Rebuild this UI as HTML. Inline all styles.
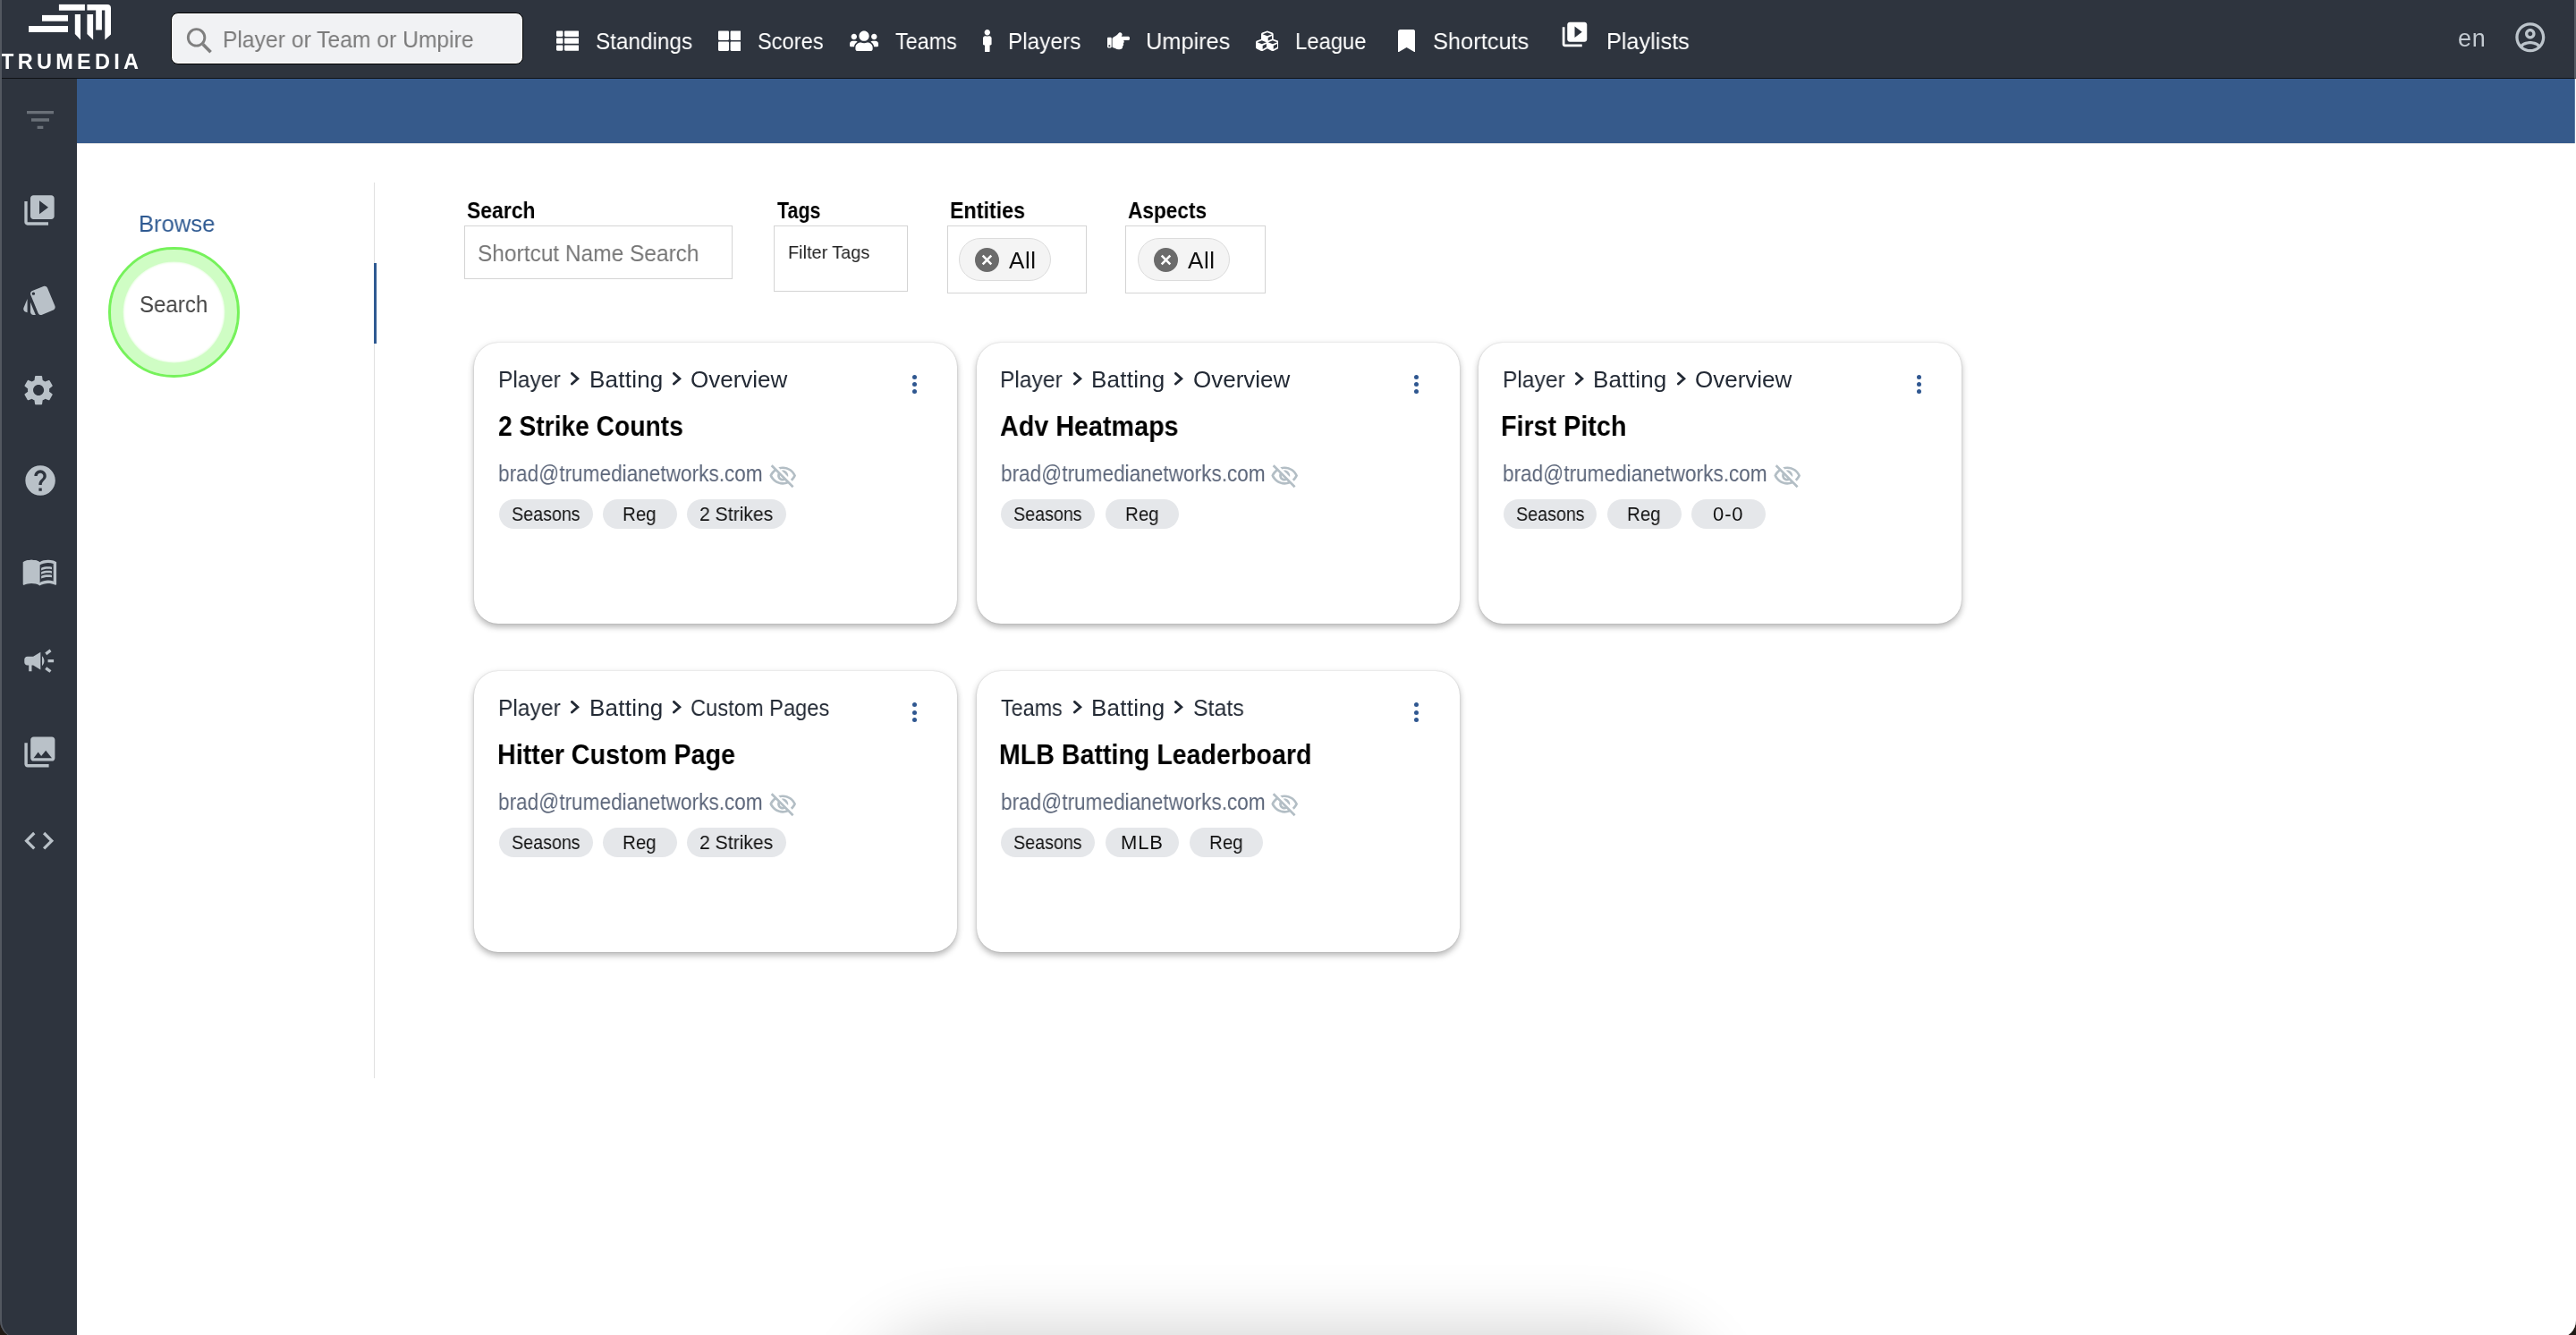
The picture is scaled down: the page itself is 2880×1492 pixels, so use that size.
<!DOCTYPE html>
<html lang="en"><head><meta charset="utf-8"><title>TruMedia - Shortcuts</title>
<style>
html,body{margin:0;padding:0;width:2880px;height:1492px;overflow:hidden;background:#fff;font-family:'Liberation Sans',sans-serif;}
.a{position:absolute;display:block;}
.t{position:absolute;white-space:nowrap;line-height:1;transform-origin:0 0;will-change:transform;}
.card{position:absolute;width:540px;height:314px;border-radius:27px;background:#fff;box-shadow:0 0 1.5px rgba(0,0,0,.2),0 4px 7px rgba(0,0,0,.25),0 1px 10px rgba(0,0,0,.06);}
.dot{position:absolute;width:5.2px;height:5.2px;border-radius:50%;background:#2f5790;}
.chip{position:absolute;height:33px;border-radius:16.5px;background:#e5e7ea;}
.box{position:absolute;border:1.5px solid #d4d4d4;box-sizing:border-box;background:#fff;}
.pill{position:absolute;height:48px;border-radius:24px;background:#f4f4f4;border:1.5px solid #dcdcdc;box-sizing:border-box;}
.xic{position:absolute;width:27px;height:27px;border-radius:50%;background:#6b6b6b;}
.sb path{fill:#b9c1c8;}
.nv path{fill:#fff;}
</style></head><body>
<!-- header -->
<header class="a" style="left:0;top:0;width:2880px;height:87px;background:#2e343e"></header>
<div class="a" style="left:0;top:87px;width:2880px;height:1px;background:#101215"></div>
<!-- sidebar -->
<nav class="a" style="left:0;top:88px;width:86px;height:1404px;background:#2e343e"></nav>
<!-- blue band -->
<div class="a" style="left:86px;top:88px;width:2793px;height:72px;background:#365a8b"></div>
<div class="a" style="left:86px;top:160px;width:2793px;height:1px;background:#e6e6e6"></div>
<!-- logo -->
<svg class="a" style="left:0;top:0;will-change:transform" width="170" height="86" viewBox="0 0 170 86">
 <g fill="#fff">
  <rect x="65.9" y="4.9" width="29" height="6.8"/>
  <rect x="47" y="16.9" width="29" height="6.8"/>
  <rect x="32.1" y="29" width="43.9" height="7"/>
  <path d="M83.8 16 H90 V44.5 L83.8 38 Z"/>
  <path d="M97.4 16 H104.1 V44.5 L97.4 38 Z"/>
  <path d="M97.4 4.9 H120 Q124 4.9 124 9 V38.4 L117.3 44.5 V11.6 H113.9 V33.4 H107.2 V11.6 H97.4 Z"/>
 </g>
 <text x="1" y="76.8" font-family="Liberation Sans" font-weight="700" font-size="23.5" fill="#fff" textLength="154" lengthAdjust="spacing">TRUMEDIA</text>
</svg>
<!-- global search -->
<div class="a" style="left:191px;top:13.5px;width:394px;height:58.5px;box-sizing:border-box;border:1.3px solid #000;border-radius:8px;background:#f1f2f4;box-shadow:inset 0 0 0 1px #fff"></div>
<svg class="a" style="left:200px;top:25px" width="44" height="40" viewBox="0 0 44 40"><circle cx="19.6" cy="16.9" r="9.25" fill="none" stroke="#7f7f7f" stroke-width="2.9"/><path d="M26.9 24.4 L35.6 33.2" stroke="#7f7f7f" stroke-width="3.6"/></svg>
<!-- nav icons -->
<svg class="a nv" style="left:621.9px;top:32.7px" width="25.4" height="25.4" viewBox="0 0 512 512"><path d="M149.333 216v80c0 13.255-10.745 24-24 24H24c-13.255 0-24-10.745-24-24v-80c0-13.255 10.745-24 24-24h101.333c13.255 0 24 10.745 24 24zM0 376v80c0 13.255 10.745 24 24 24h101.333c13.255 0 24-10.745 24-24v-80c0-13.255-10.745-24-24-24H24c-13.255 0-24 10.745-24 24zM125.333 32H24C10.745 32 0 42.745 0 56v80c0 13.255 10.745 24 24 24h101.333c13.255 0 24-10.745 24-24V56c0-13.255-10.745-24-24-24zm80 448H488c13.255 0 24-10.745 24-24v-80c0-13.255-10.745-24-24-24H205.333c-13.255 0-24 10.745-24 24v80c0 13.255 10.745 24 24 24zm-24-424v80c0 13.255 10.745 24 24 24H488c13.255 0 24-10.745 24-24V56c0-13.255-10.745-24-24-24H205.333c-13.255 0-24 10.745-24 24zm24 264H488c13.255 0 24-10.745 24-24v-80c0-13.255-10.745-24-24-24H205.333c-13.255 0-24 10.745-24 24v80c0 13.255 10.745 24 24 24z"/></svg>
<svg class="a nv" style="left:802.7px;top:32.9px" width="25.6" height="25.6" viewBox="0 0 512 512"><path d="M296 32h192c13.255 0 24 10.745 24 24v160c0 13.255-10.745 24-24 24H296c-13.255 0-24-10.745-24-24V56c0-13.255 10.745-24 24-24zm-80 0H24C10.745 32 0 42.745 0 56v160c0 13.255 10.745 24 24 24h192c13.255 0 24-10.745 24-24V56c0-13.255-10.745-24-24-24zM0 296v160c0 13.255 10.745 24 24 24h192c13.255 0 24-10.745 24-24V296c0-13.255-10.745-24-24-24H24c-13.255 0-24 10.745-24 24zm296 184h192c13.255 0 24-10.745 24-24V296c0-13.255-10.745-24-24-24H296c-13.255 0-24 10.745-24 24v160c0 13.255 10.745 24 24 24z"/></svg>
<svg class="a nv" style="left:949.8px;top:33.2px" width="32.1" height="25.7" viewBox="0 0 640 512"><path d="M96 224c35.3 0 64-28.7 64-64s-28.7-64-64-64-64 28.7-64 64 28.7 64 64 64zm448 0c35.3 0 64-28.7 64-64s-28.7-64-64-64-64 28.7-64 64 28.7 64 64 64zm32 32h-64c-17.6 0-33.5 7.1-45.1 18.6 40.3 22.1 68.9 62 75.1 109.4h66c17.7 0 32-14.3 32-32v-32c0-35.3-28.7-64-64-64zm-256 0c61.9 0 112-50.1 112-112S381.9 32 320 32 208 82.1 208 144s50.1 112 112 112zm76.8 32h-8.3c-20.8 10-43.9 16-68.5 16s-47.600-6-68.5-16h-8.3C179.6 288 128 339.6 128 403.2V432c0 26.5 21.5 48 48 48h288c26.5 0 48-21.5 48-48v-28.8c0-63.6-51.6-115.2-115.2-115.2zm-223.7-13.4C161.5 263.1 145.6 256 128 256H64c-35.3 0-64 28.7-64 64v32c0 17.7 14.3 32 32 32h65.9c6.3-47.4 34.9-87.3 75.2-109.4z"/></svg>
<svg class="a nv" style="left:1099.1px;top:32.9px" width="9.6" height="25.5" viewBox="0 0 192 512"><path d="M96 0c35.346 0 64 28.654 64 64s-28.654 64-64 64-64-28.654-64-64S60.654 0 96 0m48 144h-11.36c-22.711 10.443-49.59 10.894-73.28 0H48c-26.51 0-48 21.49-48 48v136c0 13.255 10.745 24 24 24h16v136c0 13.255 10.745 24 24 24h64c13.255 0 24-10.745 24-24V352h16c13.255 0 24-10.745 24-24V192c0-26.51-21.49-48-48-48z"/></svg>
<svg class="a nv" style="left:1237.7px;top:32.7px" width="25.3" height="25.3" viewBox="0 0 512 512"><path d="M512 199.652c0 23.625-20.65 43.826-44.8 43.826h-99.851c16.34 17.048 18.346 49.766-6.299 70.944 14.288 22.829 2.147 53.017-16.45 62.315C353.574 425.878 322.654 448 272 448c-2.746 0-13.276-.203-16-.195-61.971.168-76.894-31.065-123.731-38.315C120.596 407.683 112 397.599 112 385.786V214.261l.002-.001c.011-18.366 10.607-35.889 28.464-43.845 28.886-12.994 95.413-49.038 107.534-77.323 7.797-18.194 21.384-29.084 40-29.092 34.222-.014 57.752 35.098 44.119 66.908-3.583 8.359-8.312 16.670-14.153 24.918H467.2c23.45 0 44.8 20.543 44.8 43.826zM96 200v192c0 13.255-10.745 24-24 24H24c-13.255 0-24-10.745-24-24V200c0-13.255 10.745-24 24-24h48c13.255 0 24 10.745 24 24zM68 368c0-11.046-8.954-20-20-20s-20 8.954-20 20 8.954 20 20 20 20-8.954 20-20z"/></svg>
<svg class="a nv" style="left:1403.6px;top:33.1px" width="25.7" height="25.7" viewBox="0 0 512 512"><path d="M488.6 250.2L392 214V105.5c0-15-9.3-28.4-23.4-33.7l-100-37.5c-8.1-3.1-17.1-3.1-25.3 0l-100 37.5c-14.1 5.3-23.4 18.7-23.4 33.7V214l-96.6 36.2C9.3 255.5 0 268.9 0 283.9V394c0 13.6 7.7 26.1 19.9 32.2l100 50c10.1 5.1 22.1 5.1 32.2 0l103.9-52 103.9 52c10.1 5.1 22.100 5.1 32.2 0l100-50c12.2-6.1 19.9-18.6 19.9-32.2V283.9c0-15-9.3-28.4-23.4-33.7zM358 214.8l-85 31.9v-68.2l85-37v73.3zM154 104.1l102-38.2 102 38.2v.6l-102 41.4-102-41.4v-.6zm84 291.1l-85 42.5v-79.1l85-38.8v75.4zm0-112l-102 41.4-102-41.4v-.6l102-38.2 102 38.2v.6zm240 112l-85 42.5v-79.1l85-38.8v75.4zm0-112l-102 41.4-102-41.4v-.6l102-38.2 102 38.2v.6z"/></svg>
<svg class="a nv" style="left:1563px;top:32.7px" width="19.2" height="25.6" viewBox="0 0 384 512"><path d="M0 512V48C0 21.49 21.49 0 48 0h288c26.51 0 48 21.49 48 48v464L192 400 0 512z"/></svg>
<svg class="a nv" style="left:1744.35px;top:22.05px" width="33" height="33" viewBox="0 0 24 24"><path d="M4 6H2v14c0 1.1.9 2 2 2h14v-2H4V6zm16-4H8c-1.1 0-2 .9-2 2v12c0 1.1.9 2 2 2h12c1.1 0 2-.9 2-2V4c0-1.1-.9-2-2-2zm-8 12.5v-9l6 4.5-6 4.5z"/></svg>
<!-- account -->
<svg class="a" style="left:2808.7px;top:22.3px" width="39.6" height="39.6" viewBox="0 0 24 24"><path fill="#bcc4cb" d="M12 2C6.48 2 2 6.48 2 12s4.48 10 10 10 10-4.48 10-10S17.52 2 12 2zM7.07 18.28c.43-.9 3.05-1.78 4.930-1.78s4.51.88 4.93 1.78C15.570 19.36 13.860 20 12 20s-3.57-.64-4.93-1.72zm11.29-1.45c-1.43-1.74-4.9-2.33-6.36-2.33s-4.93.59-6.36 2.33C4.62 15.49 4 13.82 4 12c0-4.41 3.59-8 8-8s8 3.59 8 8c0 1.82-.62 3.49-1.64 4.83zM12 6c-1.94 0-3.5 1.56-3.5 3.5S10.06 13 12 13s3.5-1.56 3.5-3.5S13.94 6 12 6zm0 5c-.83 0-1.5-.67-1.5-1.5S11.17 8 12 8s1.5.67 1.5 1.5S12.83 11 12 11z"/></svg>
<!-- sidebar icons -->
<svg class="a" style="left:24.5px;top:114px" width="40" height="40" viewBox="0 0 24 24"><path fill="#6a7078" d="M10 18h4v-2h-4v2zM3 6v2h18V6H3zm3 7h12v-2H6v2z"/></svg>
<svg class="a sb" style="left:24.4px;top:215.3px" width="40" height="40" viewBox="0 0 24 24"><path d="M4 6H2v14c0 1.1.9 2 2 2h14v-2H4V6zm16-4H8c-1.1 0-2 .9-2 2v12c0 1.1.9 2 2 2h12c1.1 0 2-.9 2-2V4c0-1.1-.9-2-2-2zm-8 12.5v-9l6 4.5-6 4.5z"/></svg>
<svg class="a sb" style="left:24.1px;top:315.3px" width="40.8" height="40.8" viewBox="0 0 24 24"><path d="M2.53 19.65l1.34.56v-9.03l-2.43 5.86c-.41 1.02.08 2.19 1.09 2.61zm19.5-3.7L17.07 3.98c-.31-.75-1.04-1.21-1.81-1.23-.26 0-.53.04-.79.15L7.1 5.95c-.75.31-1.21 1.03-1.23 1.8-.01.27.04.54.15.8l4.96 11.97c.31.76 1.05 1.22 1.83 1.23.26 0 .52-.05.77-.15l7.36-3.05c1.02-.42 1.51-1.59 1.09-2.6zM7.88 8.75c-.55 0-1-.45-1-1s.45-1 1-1 1 .45 1 1-.45 1-1 1zm-2 11c0 1.1.9 2 2 2h1.45l-3.45-8.34v6.34z"/></svg>
<svg class="a sb" style="left:23.1px;top:416.15px" width="40.2" height="40.2" viewBox="0 0 24 24"><path d="M19.14 12.94c.04-.3.06-.61.06-.94 0-.32-.02-.64-.07-.94l2.030-1.58c.18-.14.23-.41.12-.61l-1.92-3.32c-.12-.22-.37-.29-.59-.22l-2.39.96c-.5-.38-1.030-.7-1.62-.94l-.36-2.54c-.04-.24-.24-.41-.48-.41h-3.84c-.24 0-.43.17-.47.41l-.36 2.54c-.59.24-1.13.57-1.62.94l-2.39-.96c-.22-.08-.47 0-.59.22L2.74 8.87c-.12.21-.08.47.12.61l2.03 1.58c-.05.3-.09.63-.09.94s.02.64.07.94l-2.03 1.58c-.18.14-.23.41-.12.61l1.92 3.32c.12.22.37.29.59.22l2.39-.96c.5.38 1.03.7 1.62.94l.36 2.54c.05.24.24.41.48.41h3.84c.24 0 .44-.17.47-.41l.36-2.54c.59-.24 1.13-.56 1.62-.94l2.39.96c.22.08.47 0 .59-.22l1.92-3.32c.12-.22.07-.47-.12-.61l-2.01-1.58zM12 15.6c-1.98 0-3.6-1.62-3.6-3.6s1.62-3.6 3.6-3.6 3.6 1.62 3.6 3.6-1.62 3.6-3.6 3.6z"/></svg>
<svg class="a sb" style="left:24.65px;top:517.15px" width="40.2" height="40.2" viewBox="0 0 24 24"><path d="M12 2C6.48 2 2 6.48 2 12s4.48 10 10 10 10-4.48 10-10S17.52 2 12 2zm1 17h-2v-2h2v2zm2.07-7.75l-.9.92C13.45 12.9 13 13.5 13 15h-2v-.5c0-1.1.45-2.1 1.17-2.83l1.24-1.26c.37-.36.59-.86.59-1.41 0-1.1-.9-2-2-2s-2 .9-2 2H8c0-2.21 1.79-4 4-4s4 1.79 4 4c0 .88-.36 1.68-.93 2.25z"/></svg>
<svg class="a sb" style="left:23.5px;top:618.35px" width="40.8" height="40.8" viewBox="0 0 24 24"><path d="M21 5c-1.11-.35-2.33-.5-3.5-.5-1.95 0-4.05.4-5.5 1.5-1.45-1.1-3.55-1.5-5.5-1.5S2.45 4.9 1 6v14.65c0 .25.25.5.5.5.1 0 .15-.05.25-.05C3.100 20.45 5.050 20 6.5 20c1.95 0 4.05.4 5.5 1.5 1.35-.85 3.8-1.5 5.5-1.5 1.65 0 3.35.3 4.75 1.05.1.05.15.05.25.05.25 0 .5-.25.5-.5V6c-.6-.45-1.25-.75-2-1zm0 13.5c-1.1-.35-2.3-.5-3.5-.5-1.7 0-4.15.65-5.5 1.5V8c1.35-.85 3.8-1.5 5.5-1.5 1.2 0 2.4.15 3.5.5v11.5z"/><path d="M17.5 10.5c.88 0 1.73.09 2.5.26V9.24c-.79-.15-1.64-.24-2.5-.24-1.7 0-3.24.29-4.5.83v1.66c1.13-.64 2.7-.99 4.5-.99zM13 12.490v1.66c1.13-.64 2.7-.99 4.5-.99.88 0 1.73.09 2.5.26V11.9c-.79-.15-1.64-.24-2.5-.24-1.7 0-3.24.3-4.5.83zM17.5 14.33c-1.7 0-3.24.29-4.5.83v1.66c1.13-.64 2.7-.99 4.5-.99.88 0 1.73.09 2.5.26v-1.52c-.79-.16-1.64-.24-2.5-.24z"/><path d="M1.5 6.2 C3 5 5 4.6 6.5 4.6 8.5 4.6 10.5 5 12 6.1 V19.6 C10.6 18.6 8.2 18 6.5 18 5 18 3 18.3 1.5 19 Z"/></svg>
<svg class="a sb" style="left:24.4px;top:719.4px" width="39.4" height="39.4" viewBox="0 0 24 24"><path d="M18 11v2h4v-2h-4zm-2 6.61c.96.71 2.21 1.65 3.2 2.39.4-.53.8-1.07 1.2-1.6-.99-.74-2.24-1.68-3.2-2.4-.4.54-.8 1.08-1.2 1.61zM20.4 5.6c-.4-.53-.8-1.07-1.2-1.6-.99.74-2.24 1.68-3.2 2.4.4.53.8 1.07 1.2 1.6.96-.72 2.21-1.65 3.2-2.4zM4 9c-1.1 0-2 .9-2 2v2c0 1.1.9 2 2 2h1v4h2v-4h1l5 3V6L8 9H4zm11.5 3c0-1.33-.58-2.53-1.5-3.35v6.69c.92-.81 1.5-2.01 1.5-3.34z"/></svg>
<svg class="a sb" style="left:24.3px;top:819.6px" width="40.8" height="40.8" viewBox="0 0 24 24"><path d="M22 16V4c0-1.1-.9-2-2-2H8c-1.1 0-2 .9-2 2v12c0 1.1.9 2 2 2h12c1.1 0 2-.9 2-2zm-11-4l2.03 2.71L16 11l4 5H8l3-4zM2 6v14c0 1.1.9 2 2 2h14v-2H4V6H2z"/></svg>
<svg class="a sb" style="left:24.4px;top:919.8px" width="39.4" height="39.4" viewBox="0 0 24 24"><path d="M9.4 16.6L4.8 12l4.6-4.6L8 6l-6 6 6 6 1.4-1.4zm5.2 0l4.6-4.6-4.6-4.6L16 6l6 6-6 6-1.4-1.4z"/></svg>
<!-- left panel -->
<div class="a" style="left:418px;top:204px;width:1px;height:1001px;background:#e0e0e0"></div>
<div class="a" style="left:418px;top:293.6px;width:3px;height:90.4px;background:#2f5a92"></div>
<div class="a" style="left:121.3px;top:275.6px;width:146.6px;height:146.6px;box-sizing:border-box;border-radius:50%;border:3.6px solid #76f25b;box-shadow:inset 0 0 0 13.6px #cffdc4, inset 0 0 2px 14.6px #e4fddd;filter:blur(.3px)"></div>
<!-- filters -->
<div class="box" style="left:519.2px;top:252px;width:299.5px;height:59.6px"></div>
<div class="box" style="left:865.3px;top:252.4px;width:149.4px;height:73.4px"></div>
<div class="box" style="left:1058.5px;top:252.4px;width:156.3px;height:75.2px"></div>
<div class="box" style="left:1258.3px;top:252.4px;width:156.6px;height:75.2px"></div>
<div class="pill" style="left:1072px;top:266.4px;width:102.5px"></div>
<div class="pill" style="left:1272px;top:266.4px;width:102.5px"></div>
<svg class="a" style="left:1090px;top:277px" width="27" height="27" viewBox="0 0 27 27"><circle cx="13.5" cy="13.5" r="13.5" fill="#6b6b6b"/><path d="M8.7 8.7 L18.3 18.3 M18.3 8.7 L8.7 18.3" stroke="#fff" stroke-width="2.6"/></svg>
<svg class="a" style="left:1290px;top:277px" width="27" height="27" viewBox="0 0 27 27"><circle cx="13.5" cy="13.5" r="13.5" fill="#6b6b6b"/><path d="M8.7 8.7 L18.3 18.3 M18.3 8.7 L8.7 18.3" stroke="#fff" stroke-width="2.6"/></svg>
<!-- bottom off-screen shadow -->
<div class="a" style="left:988px;top:1515px;width:900px;height:200px;border-radius:80px;background:#fff;box-shadow:0 0 80px 24px rgba(0,0,0,.2)"></div>
<div class="card" style="left:530.4px;top:383.0px"></div>
<svg class="a" style="left:638.1px;top:416.4px" width="11" height="15" viewBox="0 0 11 15"><path d="M1.4 1.4 L7.9 7.2 L1.4 13" fill="none" stroke="#232a35" stroke-width="2.8" stroke-linecap="round" stroke-linejoin="miter"/></svg>
<svg class="a" style="left:751.9px;top:416.4px" width="11" height="15" viewBox="0 0 11 15"><path d="M1.4 1.4 L7.9 7.2 L1.4 13" fill="none" stroke="#232a35" stroke-width="2.8" stroke-linecap="round" stroke-linejoin="miter"/></svg>
<svg class="a" style="left:858.9px;top:515.6px" width="32.4" height="32.4" viewBox="0 0 24 24"><path fill="#b3bec5" d="M12 6c3.79 0 7.17 2.13 8.82 5.5-.59 1.22-1.42 2.27-2.41 3.12l1.41 1.41c1.39-1.23 2.49-2.77 3.18-4.53C21.27 7.11 17 4 12 4c-1.27 0-2.49.2-3.64.57l1.65 1.65C10.66 6.09 11.32 6 12 6zm-1.07 1.14L13 9.21c.57.25 1.03.71 1.28 1.28l2.07 2.07c.08-.34.14-.7.14-1.07C16.5 9.01 14.48 7 12 7c-.37 0-.72.05-1.07.14zM2.01 3.87l2.68 2.68C3.06 7.83 1.77 9.53 1 11.5 2.73 15.89 7 19 12 19c1.52 0 2.980-.29 4.32-.82l3.42 3.42 1.41-1.41L3.42 2.45 2.01 3.87zm7.5 7.5l2.61 2.61c-.04.01-.08.02-.12.02-1.38 0-2.5-1.12-2.5-2.5 0-.05.01-.08.01-.13zm-3.4-3.4l1.75 1.75c-.23.55-.36 1.15-.36 1.78 0 2.48 2.02 4.5 4.5 4.5.63 0 1.23-.13 1.77-.36l.98.98c-.88.24-1.8.38-2.75.38-3.79 0-7.170-2.13-8.82-5.5.7-1.43 1.72-2.61 2.93-3.53z"/></svg>
<div class="dot" style="left:1019.9px;top:418.9px"></div><div class="dot" style="left:1019.9px;top:427.1px"></div><div class="dot" style="left:1019.9px;top:435.3px"></div>
<div class="chip" style="left:558.0px;top:557.9px;width:104.8px"></div>
<div class="chip" style="left:674.3px;top:557.9px;width:82.5px"></div>
<div class="chip" style="left:768.3px;top:557.9px;width:110.4px"></div>
<div class="card" style="left:1091.8px;top:383.0px"></div>
<svg class="a" style="left:1199.5px;top:416.4px" width="11" height="15" viewBox="0 0 11 15"><path d="M1.4 1.4 L7.9 7.2 L1.4 13" fill="none" stroke="#232a35" stroke-width="2.8" stroke-linecap="round" stroke-linejoin="miter"/></svg>
<svg class="a" style="left:1313.3px;top:416.4px" width="11" height="15" viewBox="0 0 11 15"><path d="M1.4 1.4 L7.9 7.2 L1.4 13" fill="none" stroke="#232a35" stroke-width="2.8" stroke-linecap="round" stroke-linejoin="miter"/></svg>
<svg class="a" style="left:1420.3px;top:515.6px" width="32.4" height="32.4" viewBox="0 0 24 24"><path fill="#b3bec5" d="M12 6c3.79 0 7.17 2.13 8.82 5.5-.59 1.22-1.42 2.27-2.41 3.12l1.41 1.41c1.39-1.23 2.49-2.77 3.18-4.53C21.27 7.11 17 4 12 4c-1.27 0-2.49.2-3.64.57l1.65 1.65C10.66 6.09 11.32 6 12 6zm-1.07 1.14L13 9.21c.57.25 1.03.71 1.28 1.28l2.07 2.07c.08-.34.14-.7.14-1.07C16.5 9.01 14.48 7 12 7c-.37 0-.72.05-1.07.14zM2.01 3.87l2.68 2.68C3.06 7.83 1.77 9.53 1 11.5 2.73 15.89 7 19 12 19c1.52 0 2.980-.29 4.32-.82l3.42 3.42 1.41-1.41L3.42 2.45 2.01 3.87zm7.5 7.5l2.61 2.61c-.04.01-.08.02-.12.02-1.38 0-2.5-1.12-2.5-2.5 0-.05.01-.08.01-.13zm-3.4-3.4l1.75 1.75c-.23.55-.36 1.15-.36 1.78 0 2.48 2.02 4.5 4.5 4.5.63 0 1.23-.13 1.77-.36l.98.98c-.88.24-1.8.38-2.75.38-3.79 0-7.170-2.13-8.82-5.5.7-1.43 1.72-2.61 2.93-3.53z"/></svg>
<div class="dot" style="left:1581.3px;top:418.9px"></div><div class="dot" style="left:1581.3px;top:427.1px"></div><div class="dot" style="left:1581.3px;top:435.3px"></div>
<div class="chip" style="left:1119.4px;top:557.9px;width:104.8px"></div>
<div class="chip" style="left:1235.7px;top:557.9px;width:82.5px"></div>
<div class="card" style="left:1653.1px;top:383.0px"></div>
<svg class="a" style="left:1760.8px;top:416.4px" width="11" height="15" viewBox="0 0 11 15"><path d="M1.4 1.4 L7.9 7.2 L1.4 13" fill="none" stroke="#232a35" stroke-width="2.8" stroke-linecap="round" stroke-linejoin="miter"/></svg>
<svg class="a" style="left:1874.6px;top:416.4px" width="11" height="15" viewBox="0 0 11 15"><path d="M1.4 1.4 L7.9 7.2 L1.4 13" fill="none" stroke="#232a35" stroke-width="2.8" stroke-linecap="round" stroke-linejoin="miter"/></svg>
<svg class="a" style="left:1981.6px;top:515.6px" width="32.4" height="32.4" viewBox="0 0 24 24"><path fill="#b3bec5" d="M12 6c3.79 0 7.17 2.13 8.82 5.5-.59 1.22-1.42 2.27-2.41 3.12l1.41 1.41c1.39-1.23 2.49-2.77 3.18-4.53C21.27 7.11 17 4 12 4c-1.27 0-2.49.2-3.64.57l1.65 1.65C10.66 6.09 11.32 6 12 6zm-1.07 1.14L13 9.21c.57.25 1.03.71 1.28 1.28l2.07 2.07c.08-.34.14-.7.14-1.07C16.5 9.01 14.48 7 12 7c-.37 0-.72.05-1.07.14zM2.01 3.87l2.68 2.68C3.06 7.83 1.77 9.53 1 11.5 2.73 15.89 7 19 12 19c1.52 0 2.980-.29 4.32-.82l3.42 3.42 1.41-1.41L3.42 2.45 2.01 3.87zm7.5 7.5l2.61 2.61c-.04.01-.08.02-.12.02-1.38 0-2.5-1.12-2.5-2.5 0-.05.01-.08.01-.13zm-3.4-3.4l1.75 1.75c-.23.55-.36 1.15-.36 1.78 0 2.48 2.02 4.5 4.5 4.5.63 0 1.23-.13 1.77-.36l.98.98c-.88.24-1.8.38-2.75.38-3.79 0-7.170-2.13-8.82-5.5.7-1.43 1.72-2.61 2.93-3.53z"/></svg>
<div class="dot" style="left:2142.6px;top:418.9px"></div><div class="dot" style="left:2142.6px;top:427.1px"></div><div class="dot" style="left:2142.6px;top:435.3px"></div>
<div class="chip" style="left:1680.7px;top:557.9px;width:104.8px"></div>
<div class="chip" style="left:1797.0px;top:557.9px;width:82.5px"></div>
<div class="chip" style="left:1891.0px;top:557.9px;width:82.5px"></div>
<div class="card" style="left:530.4px;top:750.0px"></div>
<svg class="a" style="left:638.1px;top:783.4px" width="11" height="15" viewBox="0 0 11 15"><path d="M1.4 1.4 L7.9 7.2 L1.4 13" fill="none" stroke="#232a35" stroke-width="2.8" stroke-linecap="round" stroke-linejoin="miter"/></svg>
<svg class="a" style="left:751.9px;top:783.4px" width="11" height="15" viewBox="0 0 11 15"><path d="M1.4 1.4 L7.9 7.2 L1.4 13" fill="none" stroke="#232a35" stroke-width="2.8" stroke-linecap="round" stroke-linejoin="miter"/></svg>
<svg class="a" style="left:858.9px;top:882.6px" width="32.4" height="32.4" viewBox="0 0 24 24"><path fill="#b3bec5" d="M12 6c3.79 0 7.17 2.13 8.82 5.5-.59 1.22-1.42 2.27-2.41 3.12l1.41 1.41c1.39-1.23 2.49-2.77 3.18-4.53C21.27 7.11 17 4 12 4c-1.27 0-2.49.2-3.64.57l1.65 1.65C10.66 6.09 11.32 6 12 6zm-1.07 1.14L13 9.21c.57.25 1.03.71 1.28 1.28l2.07 2.07c.08-.34.14-.7.14-1.07C16.5 9.01 14.48 7 12 7c-.37 0-.72.05-1.07.14zM2.01 3.87l2.68 2.68C3.06 7.83 1.77 9.53 1 11.5 2.73 15.89 7 19 12 19c1.52 0 2.980-.29 4.32-.82l3.42 3.42 1.41-1.41L3.42 2.45 2.01 3.87zm7.5 7.5l2.61 2.61c-.04.01-.08.02-.12.02-1.38 0-2.5-1.12-2.5-2.5 0-.05.01-.08.01-.13zm-3.4-3.4l1.75 1.75c-.23.55-.36 1.15-.36 1.78 0 2.48 2.02 4.5 4.5 4.5.63 0 1.23-.13 1.77-.36l.98.98c-.88.24-1.8.38-2.75.38-3.79 0-7.170-2.13-8.82-5.5.7-1.43 1.72-2.61 2.93-3.53z"/></svg>
<div class="dot" style="left:1019.9px;top:785.3px"></div><div class="dot" style="left:1019.9px;top:793.5px"></div><div class="dot" style="left:1019.9px;top:801.7px"></div>
<div class="chip" style="left:558.0px;top:924.9px;width:104.8px"></div>
<div class="chip" style="left:674.3px;top:924.9px;width:82.5px"></div>
<div class="chip" style="left:768.3px;top:924.9px;width:110.4px"></div>
<div class="card" style="left:1091.8px;top:750.0px"></div>
<svg class="a" style="left:1199.5px;top:783.4px" width="11" height="15" viewBox="0 0 11 15"><path d="M1.4 1.4 L7.9 7.2 L1.4 13" fill="none" stroke="#232a35" stroke-width="2.8" stroke-linecap="round" stroke-linejoin="miter"/></svg>
<svg class="a" style="left:1313.3px;top:783.4px" width="11" height="15" viewBox="0 0 11 15"><path d="M1.4 1.4 L7.9 7.2 L1.4 13" fill="none" stroke="#232a35" stroke-width="2.8" stroke-linecap="round" stroke-linejoin="miter"/></svg>
<svg class="a" style="left:1420.3px;top:882.6px" width="32.4" height="32.4" viewBox="0 0 24 24"><path fill="#b3bec5" d="M12 6c3.79 0 7.17 2.13 8.82 5.5-.59 1.22-1.42 2.27-2.41 3.12l1.41 1.41c1.39-1.23 2.49-2.77 3.18-4.53C21.27 7.11 17 4 12 4c-1.27 0-2.49.2-3.64.57l1.65 1.65C10.66 6.09 11.32 6 12 6zm-1.07 1.14L13 9.21c.57.25 1.03.71 1.28 1.28l2.07 2.07c.08-.34.14-.7.14-1.07C16.5 9.01 14.48 7 12 7c-.37 0-.72.05-1.07.14zM2.01 3.87l2.68 2.68C3.06 7.83 1.77 9.53 1 11.5 2.73 15.89 7 19 12 19c1.52 0 2.980-.29 4.32-.82l3.42 3.42 1.41-1.41L3.42 2.45 2.01 3.87zm7.5 7.5l2.61 2.61c-.04.01-.08.02-.12.02-1.38 0-2.5-1.12-2.5-2.5 0-.05.01-.08.01-.13zm-3.4-3.4l1.75 1.75c-.23.55-.36 1.15-.36 1.78 0 2.48 2.02 4.5 4.5 4.5.63 0 1.23-.13 1.77-.36l.98.98c-.88.24-1.8.38-2.75.38-3.79 0-7.170-2.13-8.82-5.5.7-1.43 1.72-2.61 2.93-3.53z"/></svg>
<div class="dot" style="left:1581.3px;top:785.3px"></div><div class="dot" style="left:1581.3px;top:793.5px"></div><div class="dot" style="left:1581.3px;top:801.7px"></div>
<div class="chip" style="left:1119.4px;top:924.9px;width:104.8px"></div>
<div class="chip" style="left:1235.7px;top:924.9px;width:82.5px"></div>
<div class="chip" style="left:1329.7px;top:924.9px;width:82.5px"></div>
<span class="t" style="left:249.1px;top:31.1px;font-size:26px;font-weight:400;color:#7b7b7b;transform:scaleX(0.9488);">Player or Team or Umpire</span>
<span class="t" style="left:666.1px;top:33.0px;font-size:26px;font-weight:400;color:#ffffff;transform:scaleX(0.9342);">Standings</span>
<span class="t" style="left:847.1px;top:33.0px;font-size:26px;font-weight:400;color:#ffffff;transform:scaleX(0.9089);">Scores</span>
<span class="t" style="left:1000.5px;top:33.0px;font-size:26px;font-weight:400;color:#ffffff;transform:scaleX(0.8987);">Teams</span>
<span class="t" style="left:1127.3px;top:33.0px;font-size:26px;font-weight:400;color:#ffffff;transform:scaleX(0.9381);">Players</span>
<span class="t" style="left:1281.1px;top:33.0px;font-size:26px;font-weight:400;color:#ffffff;transform:scaleX(0.9745);">Umpires</span>
<span class="t" style="left:1447.9px;top:33.0px;font-size:26px;font-weight:400;color:#ffffff;transform:scaleX(0.9167);">League</span>
<span class="t" style="left:1601.6px;top:33.0px;font-size:26px;font-weight:400;color:#ffffff;transform:scaleX(0.9769);">Shortcuts</span>
<span class="t" style="left:1795.6px;top:33.0px;font-size:26px;font-weight:400;color:#ffffff;transform:scaleX(0.9728);">Playlists</span>
<span class="t" style="left:2748.0px;top:30.3px;font-size:27px;font-weight:400;color:#c3cad1;letter-spacing:0.70px;">en</span>
<span class="t" style="left:155.3px;top:236.6px;font-size:26px;font-weight:400;color:#2f5a92;transform:scaleX(0.9845);">Browse</span>
<span class="t" style="left:156.1px;top:326.8px;font-size:26px;font-weight:400;color:#454545;transform:scaleX(0.9250);">Search</span>
<span class="t" style="left:522.4px;top:222.3px;font-size:26px;font-weight:700;color:#000;transform:scaleX(0.8821);">Search</span>
<span class="t" style="left:869.1px;top:222.3px;font-size:26px;font-weight:700;color:#000;transform:scaleX(0.8241);">Tags</span>
<span class="t" style="left:1062.2px;top:222.3px;font-size:26px;font-weight:700;color:#000;transform:scaleX(0.8946);">Entities</span>
<span class="t" style="left:1261.4px;top:222.3px;font-size:26px;font-weight:700;color:#000;transform:scaleX(0.8707);">Aspects</span>
<span class="t" style="left:534.4px;top:269.8px;font-size:26px;font-weight:400;color:#767676;transform:scaleX(0.9410);">Shortcut Name Search</span>
<span class="t" style="left:881.0px;top:271.2px;font-size:21px;font-weight:400;color:#222;transform:scaleX(0.9463);">Filter Tags</span>
<span class="t" style="left:1127.7px;top:277.7px;font-size:26px;font-weight:400;color:#111;letter-spacing:0.55px;">All</span>
<span class="t" style="left:1327.5px;top:277.7px;font-size:26px;font-weight:400;color:#111;letter-spacing:0.55px;">All</span>
<span class="t" style="left:557.0px;top:410.8px;font-size:26px;font-weight:400;color:#232a35;transform:scaleX(0.9472);">Player</span>
<span class="t" style="left:658.5px;top:410.8px;font-size:26px;font-weight:400;color:#232a35;letter-spacing:0.23px;">Batting</span>
<span class="t" style="left:772.2px;top:410.8px;font-size:26px;font-weight:400;color:#232a35;transform:scaleX(0.9981);">Overview</span>
<span class="t" style="left:556.6px;top:460.9px;font-size:31px;font-weight:700;color:#000;transform:scaleX(0.9093);">2 Strike Counts</span>
<span class="t" style="left:557.2px;top:515.7px;font-size:26px;font-weight:400;color:#5b6579;transform:scaleX(0.8697);">brad@trumedianetworks.com</span>
<span class="t" style="left:571.9px;top:564.1px;font-size:22px;font-weight:400;color:#111;transform:scaleX(0.8952);">Seasons</span>
<span class="t" style="left:696.4px;top:564.1px;font-size:22px;font-weight:400;color:#111;transform:scaleX(0.9324);">Reg</span>
<span class="t" style="left:782.1px;top:564.1px;font-size:22px;font-weight:400;color:#111;transform:scaleX(0.9619);">2 Strikes</span>
<span class="t" style="left:1118.4px;top:410.8px;font-size:26px;font-weight:400;color:#232a35;transform:scaleX(0.9472);">Player</span>
<span class="t" style="left:1219.9px;top:410.8px;font-size:26px;font-weight:400;color:#232a35;letter-spacing:0.23px;">Batting</span>
<span class="t" style="left:1333.6px;top:410.8px;font-size:26px;font-weight:400;color:#232a35;transform:scaleX(0.9981);">Overview</span>
<span class="t" style="left:1118.0px;top:460.9px;font-size:31px;font-weight:700;color:#000;transform:scaleX(0.9268);">Adv Heatmaps</span>
<span class="t" style="left:1118.6px;top:515.7px;font-size:26px;font-weight:400;color:#5b6579;transform:scaleX(0.8697);">brad@trumedianetworks.com</span>
<span class="t" style="left:1133.3px;top:564.1px;font-size:22px;font-weight:400;color:#111;transform:scaleX(0.8952);">Seasons</span>
<span class="t" style="left:1257.8px;top:564.1px;font-size:22px;font-weight:400;color:#111;transform:scaleX(0.9324);">Reg</span>
<span class="t" style="left:1679.7px;top:410.8px;font-size:26px;font-weight:400;color:#232a35;transform:scaleX(0.9472);">Player</span>
<span class="t" style="left:1781.2px;top:410.8px;font-size:26px;font-weight:400;color:#232a35;letter-spacing:0.23px;">Batting</span>
<span class="t" style="left:1894.9px;top:410.8px;font-size:26px;font-weight:400;color:#232a35;transform:scaleX(0.9981);">Overview</span>
<span class="t" style="left:1678.3px;top:460.9px;font-size:31px;font-weight:700;color:#000;transform:scaleX(0.9257);">First Pitch</span>
<span class="t" style="left:1679.9px;top:515.7px;font-size:26px;font-weight:400;color:#5b6579;transform:scaleX(0.8697);">brad@trumedianetworks.com</span>
<span class="t" style="left:1694.6px;top:564.1px;font-size:22px;font-weight:400;color:#111;transform:scaleX(0.8952);">Seasons</span>
<span class="t" style="left:1819.1px;top:564.1px;font-size:22px;font-weight:400;color:#111;transform:scaleX(0.9324);">Reg</span>
<span class="t" style="left:1915.3px;top:564.1px;font-size:22px;font-weight:400;color:#111;letter-spacing:0.90px;">0-0</span>
<span class="t" style="left:557.0px;top:777.8px;font-size:26px;font-weight:400;color:#232a35;transform:scaleX(0.9472);">Player</span>
<span class="t" style="left:658.5px;top:777.8px;font-size:26px;font-weight:400;color:#232a35;letter-spacing:0.23px;">Batting</span>
<span class="t" style="left:772.3px;top:777.8px;font-size:26px;font-weight:400;color:#232a35;transform:scaleX(0.9107);">Custom Pages</span>
<span class="t" style="left:555.7px;top:827.9px;font-size:31px;font-weight:700;color:#000;transform:scaleX(0.9246);">Hitter Custom Page</span>
<span class="t" style="left:557.2px;top:882.7px;font-size:26px;font-weight:400;color:#5b6579;transform:scaleX(0.8697);">brad@trumedianetworks.com</span>
<span class="t" style="left:571.9px;top:931.1px;font-size:22px;font-weight:400;color:#111;transform:scaleX(0.8952);">Seasons</span>
<span class="t" style="left:696.4px;top:931.1px;font-size:22px;font-weight:400;color:#111;transform:scaleX(0.9324);">Reg</span>
<span class="t" style="left:782.1px;top:931.1px;font-size:22px;font-weight:400;color:#111;transform:scaleX(0.9619);">2 Strikes</span>
<span class="t" style="left:1119.3px;top:777.8px;font-size:26px;font-weight:400;color:#232a35;transform:scaleX(0.8974);">Teams</span>
<span class="t" style="left:1219.9px;top:777.8px;font-size:26px;font-weight:400;color:#232a35;letter-spacing:0.23px;">Batting</span>
<span class="t" style="left:1333.6px;top:777.8px;font-size:26px;font-weight:400;color:#232a35;transform:scaleX(0.9579);">Stats</span>
<span class="t" style="left:1117.1px;top:827.9px;font-size:31px;font-weight:700;color:#000;transform:scaleX(0.9221);">MLB Batting Leaderboard</span>
<span class="t" style="left:1118.6px;top:882.7px;font-size:26px;font-weight:400;color:#5b6579;transform:scaleX(0.8697);">brad@trumedianetworks.com</span>
<span class="t" style="left:1133.3px;top:931.1px;font-size:22px;font-weight:400;color:#111;transform:scaleX(0.8952);">Seasons</span>
<span class="t" style="left:1253.0px;top:931.1px;font-size:22px;font-weight:400;color:#111;letter-spacing:0.90px;">MLB</span>
<span class="t" style="left:1351.8px;top:931.1px;font-size:22px;font-weight:400;color:#111;transform:scaleX(0.9324);">Reg</span>
<div class="a" style="left:0;top:-60px;width:2880px;height:1554.7px;box-sizing:border-box;border-left:2px solid #535860;border-right:2px solid rgba(255,255,255,.2);border-radius:0 0 19px 19px;box-shadow:0 0 0 60px #201a15;pointer-events:none"></div>
</body></html>
